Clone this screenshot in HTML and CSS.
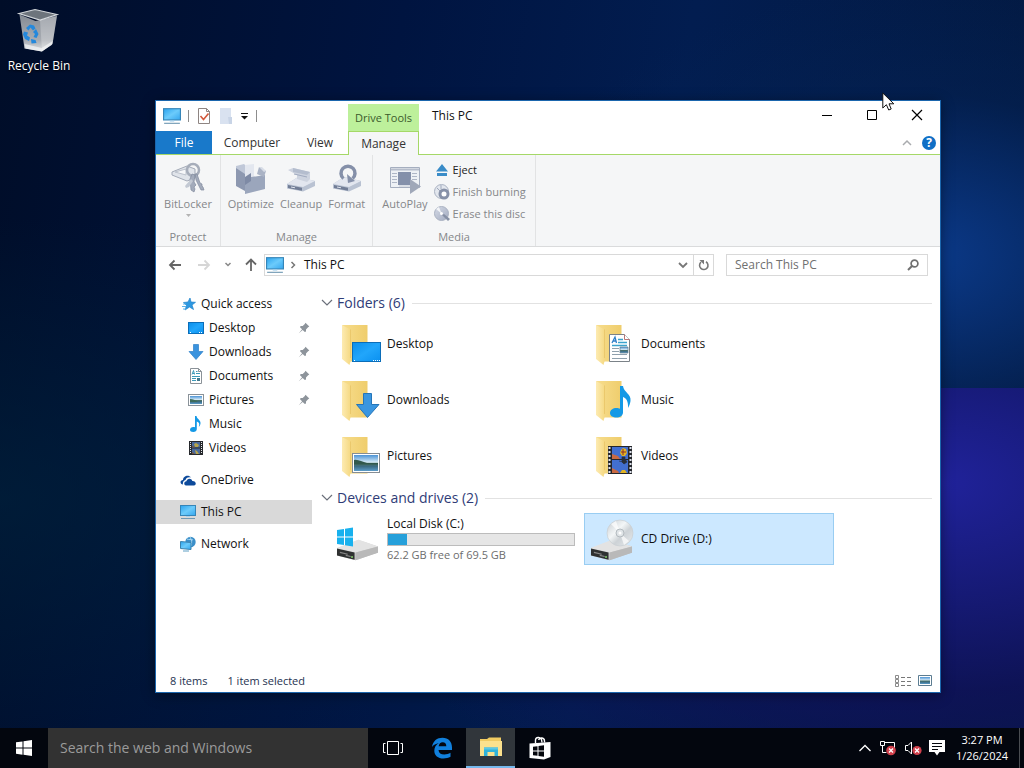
FILE: index.html
```html
<!DOCTYPE html>
<html lang="en">
  <head>
    <meta charset="utf-8" />
    <title>This PC</title>
    <meta name="viewport" content="width=device-width, initial-scale=1.0" />
    <link rel="stylesheet" href="styles.css">
  </head>
  <body>
    <!-- Shared icons -->
    <svg class="sprite" aria-hidden="true">
      <defs>
        <linearGradient id="g-screen" x1="0" y1="0" x2="1" y2="1">
          <stop offset="0" stop-color="#2aa3ee" />
          <stop offset="0.5" stop-color="#6ccbfb" />
          <stop offset="1" stop-color="#34a6ee" />
        </linearGradient>
        <linearGradient id="g-desk" x1="0" y1="0" x2="1" y2="1">
          <stop offset="0" stop-color="#0a8eea" />
          <stop offset="0.5" stop-color="#21a6fb" />
          <stop offset="1" stop-color="#0a90f0" />
        </linearGradient>
        <linearGradient id="g-folder" x1="0" y1="0" x2="1" y2="0">
          <stop offset="0" stop-color="#f7dd8d" />
          <stop offset="1" stop-color="#efcd6c" />
        </linearGradient>
        <linearGradient id="g-flap" x1="0" y1="0" x2="1" y2="0">
          <stop offset="0" stop-color="#fdebb2" />
          <stop offset="1" stop-color="#f5d983" />
        </linearGradient>
        <linearGradient id="g-photo" x1="0" y1="0" x2="0" y2="1">
          <stop offset="0" stop-color="#4b93d6" />
          <stop offset="0.45" stop-color="#d4e9f5" />
          <stop offset="0.55" stop-color="#4d7466" />
          <stop offset="0.7" stop-color="#3b6a80" />
          <stop offset="1" stop-color="#5b9cc9" />
        </linearGradient>
        <linearGradient id="g-drive" x1="0" y1="0" x2="1" y2="1">
          <stop offset="0" stop-color="#f3f3f3" />
          <stop offset="1" stop-color="#b5b5b5" />
        </linearGradient>
        <linearGradient id="g-disc" x1="0" y1="0" x2="1" y2="1">
          <stop offset="0" stop-color="#c5cbd0" />
          <stop offset="0.4" stop-color="#f3f6f7" />
          <stop offset="0.6" stop-color="#cdd2d6" />
          <stop offset="1" stop-color="#e9edef" />
        </linearGradient>
        <linearGradient id="g-bin" x1="0" y1="0" x2="0" y2="1">
          <stop offset="0" stop-color="#858b94" />
          <stop offset="0.7" stop-color="#a9adb3" />
          <stop offset="1" stop-color="#dfe1e4" />
        </linearGradient>
        <linearGradient id="g-gray" x1="0" y1="0" x2="1" y2="1">
          <stop offset="0" stop-color="#d5dae6" />
          <stop offset="1" stop-color="#a2abc0" />
        </linearGradient>
      </defs>
      <symbol id="pc" viewBox="0 0 16 16">
        <rect x="0.5" y="1.5" width="15" height="10" fill="url(#g-screen)" stroke="#3585b8" />
        <path d="M6 12h4v1H6z" fill="#a9d3ee" />
        <path d="M1 14.5h14" stroke="#6f98b3" />
      </symbol>
      <symbol id="desktop" viewBox="0 0 16 16">
        <rect x="0.5" y="2.5" width="15" height="11" fill="url(#g-desk)" stroke="#0b6db8" />
        <path d="M2 12.5h1M11 12.5h1M13 12.5h1" stroke="#fff" />
      </symbol>
      <symbol id="down" viewBox="0 0 16 16">
        <path d="M5.5 0.500h5v7h4.500L8 15.500 1 7.500h4.500z" fill="#3a93de" stroke="#2c7fc9" stroke-width="0.700" />
      </symbol>
      <symbol id="doc" viewBox="0 0 16 16">
        <path d="M2.500.5h8l3 3v12h-11z" fill="#fff" stroke="#8b9298" />
        <path d="M10.500.5v3h3" fill="none" stroke="#8b9298" />
        <path d="M4 6.500l1.500-4 1 4M4.500 5.500h2M8 3.500h1.500M8 5.500h4M4 8.500h8M4 10.500h4M4 12.500h4" fill="none" stroke="#3d9ab8" />
        <path d="M9 10h3v3H9z" fill="#3f788c" />
      </symbol>
      <symbol id="photo" viewBox="0 0 16 16">
        <rect x="0.5" y="2.5" width="15" height="11" fill="#fff" stroke="#8a9299" />
        <rect x="2" y="4" width="12" height="8" fill="url(#g-photo)" />
        <path d="M2 7c3 0 5 1 8 3H2z" fill="#3d6c5b" />
      </symbol>
      <symbol id="note" viewBox="0 0 16 16">
        <path d="M7 0h1.500c.3 3 4.500 4 4 7.500-.2 1.500-.8 2.500-1.700 3.300C12 8 11 6 8.800 5.500V13c0 1.700-1.500 3-3.500 3S2 15.200 2 13.800 3.500 11 5.300 11c.7 0 1.200.1 1.700.3z" fill="#1499e6" />
      </symbol>
      <symbol id="film" viewBox="0 0 16 16">
        <path d="M1 1h14v14H1z" fill="#26282c" />
        <path d="M2.500 2v12M13.500 2v12" stroke="#e4e6ea" stroke-dasharray="1 1" />
        <path d="M4 2h8v5.500H4zM4 8.500h8V14H4z" fill="#4a6a9c" />
        <path d="M6 4l2-1 3 2-1 2H7zM7 10l2 1 2 3H8z" fill="#b9a54a" />
        <path d="M4 6l3 1v.5H4zM4 12l3 2H4z" fill="#77543c" />
      </symbol>
      <symbol id="pin" viewBox="0 0 12 12">
        <path d="M7.500.8l3.800 3.700-1.200.7L8 7.500v2L6.800 10 4.700 7.900.8 11.200 4.100 7.300 2 5.200l.6-1.100 2.100-.2 2.100-2z" fill="#8d949b" />
      </symbol>
      <symbol id="folder" viewBox="0 0 28 42">
        <path d="M1 1h25.500v36.500H8z" fill="url(#g-folder)" />
        <path d="M1 1l8.500 4.500v31.800L8.500 41 1 35z" fill="url(#g-flap)" />
        <path d="M9.500 5.500V34" stroke="#e7c163" stroke-width="0.700" />
      </symbol>
      <symbol id="drive" viewBox="0 0 44 22">
        <path d="M1 9L23 .5 43 7.500v6L20 21.500 1 16.500z" fill="url(#g-drive)" />
        <path d="M1 9L23 .5 43 7.500 20 13.500z" fill="#e3e3e3" />
        <path d="M20 13.500l23-6v6.200L20 21.500z" fill="#b9b9b9" />
        <path d="M1 9.500l18 4v7.500L1 16.500z" fill="#2f3131" />
        <path d="M4 13.500l8 1.800M10 16.500l5 1.200" stroke="#888" stroke-width="1.200" />
        <path d="M15.500 17.500h1.800v1.500h-1.800z" fill="#8ee070" />
      </symbol>
      <symbol id="gray-drive" viewBox="0 0 28 16">
        <path d="M0 8L11 1l17 4v5L16 15.500 0 12.500z" fill="#b9c2d2" />
        <path d="M0 8L11 1l17 4-12 6z" fill="#e2e6ef" />
        <path d="M1 9l14 2.700v3L1 12z" fill="#717d96" />
        <path d="M4 11l4 .8" stroke="#dde2ec" />
      </symbol>
    </svg>

    <main class="desktop">
      <a class="shortcut" href="#">
        <svg width="48" height="48" viewBox="0 0 48 48">
          <path d="M4.500 6.500l5 34L27 43.500 37.500 36l4.500-28-21.500 5z" fill="url(#g-bin)" />
          <path d="M4 5.500L20 1.500 42 6.500 25 12z" fill="#6d747c" stroke="#d2d6da" stroke-width="1.200" />
          <path d="M25 12l17-5-4.500 29L27 43z" fill="#fff" opacity="0.250" />
          <path d="M9.700 36l17 4 11-7-1 4-10 6.500-16-3z" fill="#f4f5f6" opacity="0.700" />
          <path d="M11 20l4-3.500 4 1 1.500 3-2.500 2-2.500-3-2 3zM21 21l2.500 5-2 4-3-1 1.500-3-2-2zM9 23.500l4 1-1 3 3 2-1 3.500-4-2-2-4.500zM16 31l4.500 1 1 3-5 .5z" fill="#2488dc" />
        </svg>
        <span>Recycle Bin</span>
      </a>

      <section class="window">
        <header class="titlebar">
          <div class="quick-tools">
            <svg width="18" height="18"><use href="#pc" /></svg>
            <span class="tool-sep"></span>
            <button aria-label="Properties">
              <svg width="16" height="18" viewBox="0 0 16 18">
                <path d="M2.500 1.500h8l3 3v12h-11z" fill="#fff" stroke="#8e8582" />
                <path d="M10.500 1.500v3h3" fill="none" stroke="#8e8582" />
                <path d="M4.500 9l3 3.500 5-6" fill="none" stroke="#d3593c" stroke-width="1.600" />
              </svg>
            </button>
            <button aria-label="New folder">
              <svg width="16" height="18" viewBox="0 0 16 18">
                <path d="M2 1h11v9l1 1v6H2z" fill="#d9e2f0" />
                <path d="M10 10h4v7h-3z" fill="#c8d4e6" />
              </svg>
            </button>
            <button aria-label="Customize">
              <svg width="9" height="10" viewBox="0 0 9 10">
                <path d="M1 2.500h7" stroke="#111" />
                <path d="M1 5h7L4.500 8.500z" fill="#111" />
              </svg>
            </button>
            <span class="tool-sep"></span>
          </div>
          <div class="context-tab">Drive Tools</div>
          <h1>This PC</h1>
          <div class="window-buttons">
            <button aria-label="Minimize">
              <svg width="12" height="12" viewBox="0 0 12 12"><path d="M1 6.500h10" stroke="#000" /></svg>
            </button>
            <button aria-label="Maximize">
              <svg width="12" height="12" viewBox="0 0 12 12"><path d="M1.500 1.500h9v9h-9z" fill="none" stroke="#000" /></svg>
            </button>
            <button aria-label="Close">
              <svg width="12" height="12" viewBox="0 0 12 12"><path d="M1 1l10 10M11 1L1 11" stroke="#000" stroke-width="1.200" /></svg>
            </button>
          </div>
        </header>

        <div class="tabs">
          <button class="tab file">File</button>
          <button class="tab computer">Computer</button>
          <button class="tab view">View</button>
          <button class="tab active">Manage</button>
          <div class="tabs-end">
            <button aria-label="Collapse ribbon">
              <svg width="10" height="8" viewBox="0 0 10 8"><path d="M1 6l4-4 4 4" fill="none" stroke="#a9abae" stroke-width="1.500" /></svg>
            </button>
            <button class="help" aria-label="Help">?</button>
          </div>
        </div>

        <!-- Ribbon -->
        <div class="ribbon">
          <div class="group protect">
            <div class="group-items">
              <button class="big" disabled>
                <svg width="34" height="34" viewBox="0 0 34 34">
                  <path d="M1 10L16 4l8 3v9l-8 3L1 13z" fill="#e0e4ea" stroke="#a3aab7" />
                  <path d="M4 10l11-3v6z" fill="#f6f7f9" stroke="#bcc2cc" />
                  <circle cx="22" cy="8" r="6" fill="none" stroke="#a6adba" stroke-width="2.500" />
                  <path d="M21 12l-2 5 1 11 3 2 1-3-1-2 2-2-2-3 1-7zM24 12l1 6 5 10 3 0-1-3-1-1v-2l-2-1-3-9z" fill="#a3abbb" stroke="#818b9e" stroke-width="0.700" />
                  <path d="M20 17l-6 7 1 2 3-1 4-6z" fill="#c3c9d3" />
                </svg>
                BitLocker
                <svg width="6" height="6" viewBox="0 0 6 6"><path d="M1 2h5L3.500 5z" fill="#b3b3b3" /></svg>
              </button>
            </div>
            <div class="group-name">Protect</div>
          </div>
          <div class="group manage">
            <div class="group-items">
              <button class="big" disabled>
                <svg width="34" height="34" viewBox="0 0 34 34">
                  <path d="M2 4l8-2 3 3v18H2z" fill="#c0c8d8" />
                  <path d="M11 3l9-1v19h-9z" fill="#e3e7ef" />
                  <path d="M2 6l9 6v17l-9-5z" fill="#8d98b0" />
                  <path d="M11 16l20-3v14l-20 5z" fill="#9ba6bc" />
                  <path d="M11 15l6-4v8l-6 4z" fill="#7e8aa5" />
                  <path d="M25 5l7 4-2 6-7-3z" fill="#aab3c5" />
                  <path d="M25 5l3 0 4 4-2 1z" fill="#d8dde7" />
                </svg>
                Optimize
              </button>
              <button class="big" disabled>
                <svg width="34" height="34" viewBox="0 0 34 34">
                  <use href="#gray-drive" x="3" y="14" width="28" height="16" />
                  <path d="M4 8l5-2 17 4v7l-3 3-10-3v-4z" fill="#cdd3df" />
                  <path d="M9 6l17 4-3 3-14-3z" fill="#b4bdce" />
                  <path d="M10 12l13 3" stroke="#a0aabf" />
                </svg>
                Cleanup
              </button>
              <button class="big" disabled>
                <svg width="34" height="34" viewBox="0 0 34 34">
                  <use href="#gray-drive" x="3" y="14" width="28" height="16" />
                  <path d="M13.500 16.500a7 7 0 1 1 9 0" fill="none" stroke="#8590a9" stroke-width="3.500" />
                  <path d="M17 12l8 7-7 2z" fill="#8590a9" />
                </svg>
                Format
              </button>
            </div>
            <div class="group-name">Manage</div>
          </div>
          <div class="group media">
            <div class="group-items">
              <button class="big" disabled>
                <svg width="34" height="34" viewBox="0 0 34 34">
                  <path d="M2.500 5.500h29v20h-29z" fill="#eef1f5" stroke="#a5aebf" />
                  <path d="M3 7.500h28" stroke="#b6bdcb" stroke-width="2" />
                  <path d="M4 11.500h5M4 14.500h5M4 17.500h5M4 20.500h5M24 11.500h5M24 14.500h5M24 17.500h5" stroke="#aeb6c6" />
                  <path d="M10 10h13v13H10z" fill="#8490aa" />
                  <path d="M11 24h12" stroke="#c4cad6" />
                  <path d="M22 17l11 7.500L22 32z" fill="#a0a8b9" />
                </svg>
                AutoPlay
              </button>
              <div class="small-list">
                <button class="small">
                  <svg width="16" height="16" viewBox="0 0 16 16"><path d="M8 2l6 7.500H2zM3 11h10v3H3z" fill="#3a8cc8" /></svg>
                  Eject
                </button>
                <button class="small" disabled>
                  <svg width="16" height="16" viewBox="0 0 16 16">
                    <circle cx="7.500" cy="7.500" r="7" fill="#e3e7ee" stroke="#aab2c2" />
                    <path d="M3 4l3 3M7 1v4" stroke="#9fa8bb" />
                    <circle cx="10" cy="10" r="4" fill="#fff" stroke="#8791a8" stroke-width="3" />
                  </svg>
                  Finish burning
                </button>
                <button class="small" disabled>
                  <svg width="16" height="16" viewBox="0 0 16 16">
                    <circle cx="7.500" cy="7.500" r="7" fill="url(#g-gray)" stroke="#aab2c2" />
                    <path d="M7.500 7.500L2 3l3-2z" fill="#f3f5f8" />
                    <circle cx="7.500" cy="7.500" r="1.500" fill="#fff" />
                    <path d="M8 9l6 6 2-2-6-5z" fill="#8690a5" />
                  </svg>
                  Erase this disc
                </button>
              </div>
            </div>
            <div class="group-name">Media</div>
          </div>
        </div>

        <!-- Address row -->
        <div class="navbar">
          <div class="nav-buttons">
            <button aria-label="Back">
              <svg width="14" height="12" viewBox="0 0 14 12"><path d="M13 6H2M6.500 1.500L2 6l4.500 4.500" fill="none" stroke="#666" stroke-width="1.800" /></svg>
            </button>
            <button aria-label="Forward" disabled>
              <svg width="14" height="12" viewBox="0 0 14 12"><path d="M1 6h11M7.500 1.500L12 6l-4.500 4.500" fill="none" stroke="#d6d6d6" stroke-width="1.800" /></svg>
            </button>
            <button class="recent" aria-label="Recent locations">
              <svg width="8" height="6" viewBox="0 0 8 6"><path d="M1.500 1L4 3.500 6.500 1" fill="none" stroke="#888" stroke-width="1.500" /></svg>
            </button>
            <button aria-label="Up">
              <svg width="14" height="14" viewBox="0 0 14 14"><path d="M7 13V2M2 6.500L7 1.500l5 5" fill="none" stroke="#666" stroke-width="1.800" /></svg>
            </button>
          </div>
          <div class="address">
            <svg width="18" height="18"><use href="#pc" /></svg>
            <svg class="crumb-arrow" width="6" height="8" viewBox="0 0 6 8"><path d="M1.500 1l3 3-3 3" fill="none" stroke="#777" stroke-width="1.500" /></svg>
            <span class="crumb">This PC</span>
            <button aria-label="Previous locations">
              <svg width="10" height="8" viewBox="0 0 10 8"><path d="M1 2l4 4 4-4" fill="none" stroke="#777" stroke-width="1.800" /></svg>
            </button>
            <button class="refresh" aria-label="Refresh">
              <svg width="12" height="12" viewBox="0 0 12 12">
                <path d="M3 3.200A4.200 4.200 0 1 0 8 2.800" fill="none" stroke="#777" stroke-width="1.600" />
                <path d="M1.500 1h4.500v4.500z" fill="#777" />
              </svg>
            </button>
          </div>
          <label class="search">
            <input type="text" placeholder="Search This PC" aria-label="Search This PC" />
            <svg width="12" height="12" viewBox="0 0 12 12"><circle cx="7.500" cy="4.500" r="3.400" fill="none" stroke="#707070" stroke-width="1.700" /><path d="M5 7L1 11" stroke="#707070" stroke-width="2" /></svg>
          </label>
        </div>

        <div class="content">
          <nav class="sidebar">
            <a class="row top" href="#">
              <svg width="16" height="16" viewBox="0 0 16 16">
                <path d="M10 2l1 4 4.500.3-3.500 2.700 1.500 4.500L9.500 11 5 14l1.500-4.500L3.500 6.500 8 6z" fill="#2d98e0" stroke="#1f83cc" stroke-width="0.700" />
                <path d="M3 8h3M2 10.500h4M3 13h3" stroke="#5ab3ea" />
              </svg>
              Quick access
            </a>
            <a class="row sub" href="#"><svg width="16" height="16"><use href="#desktop" /></svg>Desktop<svg class="pin" width="12" height="12"><use href="#pin" /></svg></a>
            <a class="row sub" href="#"><svg width="16" height="16"><use href="#down" /></svg>Downloads<svg class="pin" width="12" height="12"><use href="#pin" /></svg></a>
            <a class="row sub" href="#"><svg width="16" height="16"><use href="#doc" /></svg>Documents<svg class="pin" width="12" height="12"><use href="#pin" /></svg></a>
            <a class="row sub" href="#"><svg width="16" height="16"><use href="#photo" /></svg>Pictures<svg class="pin" width="12" height="12"><use href="#pin" /></svg></a>
            <a class="row sub" href="#"><svg width="16" height="16"><use href="#note" /></svg>Music</a>
            <a class="row sub" href="#"><svg width="16" height="16"><use href="#film" /></svg>Videos</a>
            <a class="row section" href="#">
              <svg width="16" height="16" viewBox="0 0 16 16">
                <path d="M3 12.500C-.5 12 0 8 3 8c0-4 5.500-6 8-2.500-3-1-5 .5-5.500 2.500-2 .5-3 2.500-2.500 4.500z" fill="#0d4a9b" />
                <path d="M6 13.500c-2.500-.5-2.300-4 .4-4.200C7 6 11.500 5.800 12.300 9c3.700-.2 4.700 3.800 1.700 4.500z" fill="#0d4a9b" />
              </svg>
              OneDrive
            </a>
            <a class="row section selected" href="#"><svg width="16" height="16"><use href="#pc" /></svg>This PC</a>
            <a class="row section" href="#">
              <svg width="16" height="16" viewBox="0 0 16 16">
                <circle cx="10.500" cy="6" r="5.200" fill="#3b8fc9" />
                <path d="M7 3c2 1 4 0 6 1M10 1c2 3 2 6 1 9" stroke="#a6d7f2" fill="none" />
                <path d="M.5 5.500L11 6.500v7L.5 12.500z" fill="url(#g-screen)" stroke="#3b82ae" />
                <path d="M3 15h6" stroke="#5f9fc4" />
              </svg>
              Network
            </a>
          </nav>

          <div class="files">
            <h2>
              <svg width="12" height="8" viewBox="0 0 12 8"><path d="M1 1l5 5 5-5" fill="none" stroke="#6a6f7a" stroke-width="1.200" /></svg>
              Folders (6)
            </h2>
            <div class="tiles">
              <a class="tile" href="#">
                <svg width="48" height="48" viewBox="0 0 48 48">
                  <use href="#folder" x="6" y="4" width="28" height="42" />
                  <rect x="17.500" y="22.500" width="28" height="19" fill="url(#g-desk)" stroke="#0b6db8" />
                  <path d="M19 40.500h1M38 40.500h1M40 40.500h1M42 40.500h1M44 40.500h1" stroke="#fff" />
                </svg>
                Desktop
              </a>
              <a class="tile" href="#">
                <svg width="48" height="48" viewBox="0 0 48 48">
                  <use href="#folder" x="6" y="4" width="28" height="42" />
                  <path d="M20.500 14.500h15l5 5v22h-20z" fill="#fff" stroke="#7b8288" />
                  <path d="M35.500 14.500v5h5" fill="#fff" stroke="#b77" />
                  <path d="M23 23l3-6 1.500 6M24 21h3" fill="none" stroke="#2f7fc9" stroke-width="1.300" />
                  <path d="M29 19.500h5M29 22.500h9M23 25.500h15" stroke="#3ba3cd" stroke-width="1.300" />
                  <path d="M23 28.500h7M23 31.500h7M23 34.500h15M23 38.500h15" stroke="#8fa0ad" />
                  <path d="M31 27h8v6h-8z" fill="url(#g-photo)" stroke="#69808c" stroke-width="0.700" />
                </svg>
                Documents
              </a>
              <a class="tile" href="#">
                <svg width="48" height="48" viewBox="0 0 48 48">
                  <use href="#folder" x="6" y="4" width="28" height="42" />
                  <path d="M28.500 17.500h8v11h7.500L32.500 41.500 21.500 28.500h7z" fill="#3a96e0" stroke="#2475b9" />
                </svg>
                Downloads
              </a>
              <a class="tile" href="#">
                <svg width="48" height="48" viewBox="0 0 48 48">
                  <use href="#folder" x="6" y="4" width="28" height="42" />
                  <path d="M31 10h3c.5 6 8.500 8 7.500 15-.4 3-1.500 5-2.500 7 .5-7-2-10-5-11v15.500c0 3-3 5-6.500 5s-6.500-1.500-6.500-4.500 3-5 6.500-5c1.500 0 2.500.3 3.500.8z" fill="#1499e6" />
                </svg>
                Music
              </a>
              <a class="tile" href="#">
                <svg width="48" height="48" viewBox="0 0 48 48">
                  <use href="#folder" x="6" y="4" width="28" height="42" />
                  <rect x="17.500" y="21.500" width="27" height="19" fill="#fff" stroke="#858d94" />
                  <rect x="19" y="23" width="24" height="16" fill="url(#g-photo)" />
                  <path d="M19 28c4-1 8 2 13 3l11 0v1.500H19z" fill="#31584c" />
                </svg>
                Pictures
              </a>
              <a class="tile" href="#">
                <svg width="48" height="48" viewBox="0 0 48 48">
                  <use href="#folder" x="6" y="4" width="28" height="42" />
                  <path d="M19 14h24v28H19z" fill="#24262b" />
                  <path d="M20.500 15v26M41.500 15v26" stroke="#dfe3ee" stroke-width="2" stroke-dasharray="2 2" />
                  <path d="M23 15h16v12H23zM23 28h16v13H23z" fill="#426fd0" />
                  <path d="M23 22l6 2 2 3h-8zM23 36l6 3 1 2h-7z" fill="#c96a42" />
                  <path d="M32 18l2-2 3 1 1 4-2 3h-3l-2-3z" fill="#e3b422" />
                  <path d="M32 20h5M34 17v6" stroke="#8e2c24" />
                  <path d="M33 25h3v2l2 3-3 2-2-2zM30 29l4 1" fill="#282f3a" stroke="#282f3a" stroke-width="0.700" />
                  <path d="M31 41l2-3h3l2 3z" fill="#e3b422" />
                </svg>
                Videos
              </a>
            </div>

            <h2>
              <svg width="12" height="8" viewBox="0 0 12 8"><path d="M1 1l5 5 5-5" fill="none" stroke="#6a6f7a" stroke-width="1.200" /></svg>
              Devices and drives (2)
            </h2>
            <div class="tiles">
              <a class="tile" href="#">
                <svg width="48" height="48" viewBox="0 0 48 48">
                  <use href="#drive" x="1" y="24" width="43" height="22" />
                  <path d="M2 15l7-1v7.500H2zM10 13.800l8-1.300v9h-8zM2 22.500h7V30l-7-1zM10 22.500h8v9l-8-1.300z" fill="#18b1ee" />
                </svg>
                <div class="drive-info">
                  <span>Local Disk (C:)</span>
                  <progress value="10" max="100" aria-label="Space used"></progress>
                  <span class="muted">62.2 GB free of 69.5 GB</span>
                </div>
              </a>
              <a class="tile selected" href="#">
                <svg width="48" height="48" viewBox="0 0 48 48">
                  <use href="#drive" x="1" y="24" width="43" height="22" />
                  <circle cx="31" cy="18" r="13" fill="url(#g-disc)" stroke="#c9ced2" stroke-width="0.700" />
                  <path d="M31 18l-9-9 5-3zM31 18l9 8-5 4z" fill="#fff" opacity="0.700" />
                  <circle cx="31" cy="18" r="4" fill="#dfe4e7" stroke="#b3babf" />
                  <circle cx="31" cy="18" r="1.500" fill="#fff" />
                </svg>
                CD Drive (D:)
              </a>
            </div>
          </div>
        </div>

        <footer class="statusbar">
          <span>8 items</span>
          <span>1 item selected</span>
          <div class="view-buttons">
            <button aria-label="Details view">
              <svg width="18" height="14" viewBox="0 0 18 14">
                <path d="M1.500 1.500h3v3h-3zM1.500 5.500h3v3h-3zM1.500 9.500h3v3h-3z" fill="#fff" stroke="#8b8b8b" />
                <path d="M7 3.500h4M7 7.500h4M7 11.500h4M13 3.500h4M13 7.500h4M13 11.500h4" stroke="#777" />
              </svg>
            </button>
            <button aria-label="Large icons view">
              <svg width="14" height="14" viewBox="0 0 14 14">
                <path d="M.5 1.500h13v10H.5z" fill="#fff" stroke="#5c7d92" />
                <path d="M2 3h10v7H2z" fill="url(#g-photo)" />
              </svg>
            </button>
          </div>
        </footer>
      </section>

      <svg class="pointer" width="14" height="20" viewBox="0 0 14 20">
        <path d="M.8 1v15l3.600-3.300 2.300 5.300 2.500-1-2.200-5.200h4.800z" fill="#fff" stroke="#111" />
      </svg>
    </main>

    <footer class="taskbar">
      <button class="task start" aria-label="Start">
        <svg width="16" height="16" viewBox="0 0 16 16"><path d="M0 2.300l6.500-.9v6.200H0zM7.500 1.200L16 0v7.600H7.500zM0 8.500h6.500v6.200L0 13.800zM7.500 8.500H16V16l-8.500-1.200z" fill="#fff" /></svg>
      </button>
      <input class="web-search" type="text" placeholder="Search the web and Windows" aria-label="Search the web and Windows" />
      <button class="task" aria-label="Task view">
        <svg width="20" height="14" viewBox="0 0 20 14"><path d="M4.500.5h11v13h-11zM2.500 2.500h-2v9h2M17.500 2.500h2v9h-2" fill="none" stroke="#fff" /></svg>
      </button>
      <button class="task" aria-label="Edge">
        <svg width="22" height="22" viewBox="0 0 22 22">
          <path d="M1 10C2 4 6 .8 11.500.8 17.500.8 21 5 21 10.500V13H7.500c.2 3 2.500 4.500 5.800 4.500 2.400 0 4.400-.6 6.200-1.700v4C17.500 21 15 21.500 12.500 21.500 7 21.500 3.300 18.500 3.300 13.700c0-3.200 1.600-6 4.500-7.500C4.800 6.500 2.500 7.800 1 10zM7.600 9.300h7.700C15.300 6.700 14 5.200 11.700 5.200 9.500 5.200 8 6.800 7.600 9.300z" fill="#1180dd" fill-rule="evenodd" />
        </svg>
      </button>
      <button class="task open" aria-label="File Explorer">
        <svg width="24" height="22" viewBox="0 0 24 22">
          <path d="M1 3h7l2-1.500h12V20H1z" fill="#f0cb62" />
          <path d="M1 5h22v15H1z" fill="#fbe18d" />
          <path d="M5 11.500h14V20h-3.500v-4h-7v4H5z" fill="#30b3d9" />
          <path d="M5 11.500h14v2H5z" fill="#5cc8e5" />
        </svg>
      </button>
      <button class="task" aria-label="Store">
        <svg width="22" height="24" viewBox="0 0 22 24">
          <path d="M6.500 7V4c0-3 5-3.500 6-.5l.5 3M9.500 4c1.500-3 6-2.500 6 1v1.500" fill="none" stroke="#fff" stroke-width="1.400" />
          <path d="M.5 7.500L21.500 6v15L15 23.500.5 22z" fill="#fff" />
          <path d="M4 10.800l4.500-.6v4.300H4zM9.500 10l5.500-.7v5.200H9.500zM4 15.500h4.500v4.300L4 19.300zM9.500 15.500H15v5.200l-5.500-.7z" fill="#05070d" />
        </svg>
      </button>
      <div class="tray">
        <button aria-label="Show hidden icons">
          <svg width="14" height="16" viewBox="0 0 14 16"><path d="M1.500 11L7 5.500l5.500 5.500" fill="none" stroke="#fff" stroke-width="1.300" /></svg>
        </button>
        <button aria-label="Network">
          <svg width="18" height="16" viewBox="0 0 18 16">
            <path d="M1.500 1.500h4v4h-4zM5 2.500h10.500v8H8M3.500 6v6.500h4" fill="none" stroke="#fff" />
            <circle cx="12" cy="10.500" r="4.800" fill="#d0404c" />
            <path d="M10 8.500l4 4M14 8.500l-4 4" stroke="#fff" stroke-width="1.300" />
          </svg>
        </button>
        <button aria-label="Volume">
          <svg width="18" height="16" viewBox="0 0 18 16">
            <path d="M1.500 5.500H4l3.500-3.500v12L4 10.500H1.500z" fill="none" stroke="#fff" />
            <circle cx="13" cy="10.500" r="4.600" fill="#d0404c" />
            <path d="M11 8.500l4 4M15 8.500l-4 4" stroke="#fff" stroke-width="1.300" />
          </svg>
        </button>
        <button aria-label="Notifications">
          <svg width="16" height="18" viewBox="0 0 16 18">
            <path d="M0 1h16v12h-5.500L8 16.500 5.500 13H0z" fill="#fff" />
            <path d="M3 4.500h10M3 7.500h10M3 10.500h6" stroke="#05070d" />
          </svg>
        </button>
      </div>
      <button class="clock"><span>3:27 PM</span><span>1/26/2024</span></button>
      <button class="show-desktop" aria-label="Show desktop"></button>
    </footer>
  </body>
</html>
```
FILE: styles.css
```css
* {
  box-sizing: border-box;
}
body {
  margin: 0;
  height: 100vh;
  display: flex;
  flex-direction: column;
  overflow: hidden;
  font-family: "Open Sans", "Noto Sans", sans-serif;
  font-size: 12px;
  line-height: 16px;
  color: #111;
  background:
    radial-gradient(ellipse 40% 70% at 90% 66%, #0b3a8a, rgba(4, 34, 84, 0.5) 60%, transparent) 0 0 / 100% 388px no-repeat,
    radial-gradient(ellipse 60% 100% at 92% 25%, #20229a, rgba(18, 16, 94, 0.7) 55%, transparent) 0 388px / 100% 380px no-repeat,
    radial-gradient(ellipse at 0% 65%, rgba(0, 36, 62, 0.6), transparent 40%),
    linear-gradient(100deg, #000d28, #001440 35%, #021d50 60%, #03193f);
}
button {
  display: flex;
  align-items: center;
  justify-content: center;
  padding: 0;
  border: none;
  background: none;
  font: inherit;
  color: inherit;
}
input {
  border: none;
  outline: none;
  font: inherit;
}
a {
  color: inherit;
  text-decoration: none;
}
svg {
  flex: none;
  display: block;
}
.sprite {
  position: absolute;
  width: 0;
  height: 0;
}

/* Desktop */
.desktop {
  position: relative;
  flex: 1;
}
.shortcut {
  display: flex;
  flex-direction: column;
  align-items: center;
  gap: 2px;
  width: 78px;
  padding-top: 8px;
  color: #fff;
  text-shadow: 0 1px 2px #000;
}
.window {
  position: absolute;
  left: 155px;
  top: 100px;
  right: 83px;
  bottom: 35px;
  display: flex;
  flex-direction: column;
  background: #fff;
  border: 1px solid #1b66ad;
  box-shadow: 0 2px 12px rgba(0, 0, 0, 0.4);
}
.pointer {
  position: absolute;
  left: 882px;
  top: 92px;
}

/* Title bar */
.titlebar {
  display: flex;
  height: 30px;
}
.quick-tools {
  display: flex;
  align-items: center;
  gap: 6px;
  width: 192px;
  padding-left: 7px;
}
.tool-sep {
  width: 1px;
  height: 12px;
  margin: 0 1px;
  background: #8d8d8d;
}
.context-tab {
  width: 71px;
  margin-top: 3px;
  padding-top: 6px;
  background: #bdf09b;
  color: #3b5a2c;
  font-size: 11px;
  text-align: center;
}
h1 {
  flex: 1;
  margin: 0;
  padding: 7px 0 0 13px;
  font-size: 12px;
  font-weight: 400;
}
.window-buttons {
  display: flex;
  padding: 0 1px 2px 0;
}
.window-buttons button {
  width: 45px;
}

/* Ribbon tabs */
.tabs {
  display: flex;
  height: 24px;
  border-bottom: 1px solid #a5d867;
  color: #333;
}
.tab {
  padding: 0 14px;
}
.tab.file {
  width: 56px;
  background: #1979ca;
  color: #fff;
}
.tab.computer {
  width: 80px;
}
.tab.view {
  width: 56px;
}
.tab.active {
  width: 71px;
  margin-bottom: -1px;
  background: #f5f6f7;
  border: 1px solid #a5d867;
  border-width: 1px 1px 0;
}
.tabs-end {
  display: flex;
  align-items: center;
  gap: 10px;
  margin-left: auto;
  padding-right: 4px;
}
.help {
  width: 14px;
  height: 14px;
  border-radius: 50%;
  background: #0f6fc6;
  color: #fff;
  font-weight: 700;
}

/* Ribbon */
.ribbon {
  display: flex;
  height: 92px;
  background: #f5f6f7;
  border-bottom: 1px solid #dadbdc;
  color: #85878a;
  font-size: 11px;
}
.group {
  display: flex;
  flex-direction: column;
  border-right: 1px solid #e2e3e4;
}
.protect {
  width: 65px;
}
.manage {
  width: 152px;
}
.media {
  width: 163px;
}
.group-items {
  display: flex;
  flex: 1;
  justify-content: center;
  gap: 6px;
}
.group-name {
  height: 17px;
  text-align: center;
}
.big {
  flex-direction: column;
  justify-content: flex-start;
  padding-top: 7px;
  color: #85878a;
}
.small-list {
  padding-top: 4px;
}
.small {
  gap: 3px;
  height: 22px;
  color: #222;
}
.small:disabled {
  color: #85878a;
}

/* Address row */
.navbar {
  display: flex;
  gap: 12px;
  padding: 7px 12px;
}
.nav-buttons {
  display: flex;
  align-items: center;
  gap: 15px;
  margin-right: -6px;
}
.recent {
  margin: 0 -3px 0 -2px;
}
.address {
  display: flex;
  flex: 1;
  align-items: center;
  height: 22px;
  padding-left: 1px;
  border: 1px solid #d9d9d9;
}
.crumb-arrow {
  margin: 0 8px 0 6px;
}
.crumb {
  flex: 1;
}
.address button {
  width: 20px;
  height: 20px;
}
.address .refresh {
  border-left: 1px solid #d9d9d9;
}
.search {
  display: flex;
  align-items: center;
  width: 202px;
  height: 22px;
  padding: 0 8px;
  border: 1px solid #d9d9d9;
}
.search input {
  flex: 1;
  min-width: 0;
  padding: 0;
}
.search input::placeholder {
  color: #707070;
}

/* Content */
.content {
  display: flex;
  flex: 1;
  min-height: 0;
}
.sidebar {
  width: 156px;
  padding-top: 9px;
}
.row {
  display: flex;
  align-items: center;
  gap: 5px;
  height: 24px;
  padding-left: 24px;
}
.row.sub {
  padding-left: 32px;
}
.row.section {
  margin-top: 8px;
}
.row.selected {
  background: #d9d9d9;
}
.pin {
  margin: 0 2px 0 auto;
}
.files {
  flex: 1;
  padding: 9px 8px 0 9px;
}
h2 {
  display: flex;
  align-items: center;
  gap: 4px;
  height: 22px;
  margin: 0 0 4px;
  font-size: 14px;
  font-weight: 400;
  color: #2f3c77;
}
h2::after {
  content: "";
  flex: 1;
  height: 1px;
  margin-left: 3px;
  background: #e2e2e2;
}
.tiles {
  display: grid;
  grid-template-columns: 250px 250px;
  gap: 4px;
  padding: 0 0 5px 9px;
}
.tile {
  display: flex;
  align-items: center;
  gap: 4px;
  height: 52px;
  padding-left: 4px;
  border: 1px solid transparent;
}
.tile.selected {
  background: #cce8ff;
  border-color: #99cdf2;
}
.drive-info {
  display: flex;
  flex-direction: column;
  flex: 1;
  gap: 1px;
  padding-right: 4px;
}
.drive-info progress {
  appearance: none;
  width: 100%;
  height: 13px;
  border: 1px solid #bcbcbc;
}
.drive-info progress::-webkit-progress-bar {
  background: #e6e6e6;
}
.drive-info progress::-webkit-progress-value {
  background: #26a0da;
}
.muted {
  color: #6d6d6d;
  font-size: 11px;
}

/* Status bar */
.statusbar {
  display: flex;
  align-items: center;
  gap: 20px;
  height: 23px;
  padding: 0 8px 0 14px;
  color: #1e3250;
  font-size: 11px;
}
.view-buttons {
  display: flex;
  gap: 6px;
  margin-left: auto;
}

/* Taskbar */
.taskbar {
  display: flex;
  height: 40px;
  background: #03060e;
  color: #fff;
}
.task {
  width: 49px;
}
.task.start {
  width: 48px;
}
.task.open {
  background: #31363b;
  border-bottom: 2px solid #76b9ed;
}
.web-search {
  width: 320px;
  padding: 0 12px;
  background: #323232;
  font-size: 14px;
}
.web-search::placeholder {
  color: #9b9b9b;
}
.tray {
  display: flex;
  align-items: center;
  gap: 7px;
  margin-left: auto;
}
.clock {
  flex-direction: column;
  width: 74px;
  font-size: 11px;
}
.show-desktop {
  width: 5px;
  border-left: 1px solid #4a4d52;
}
```
